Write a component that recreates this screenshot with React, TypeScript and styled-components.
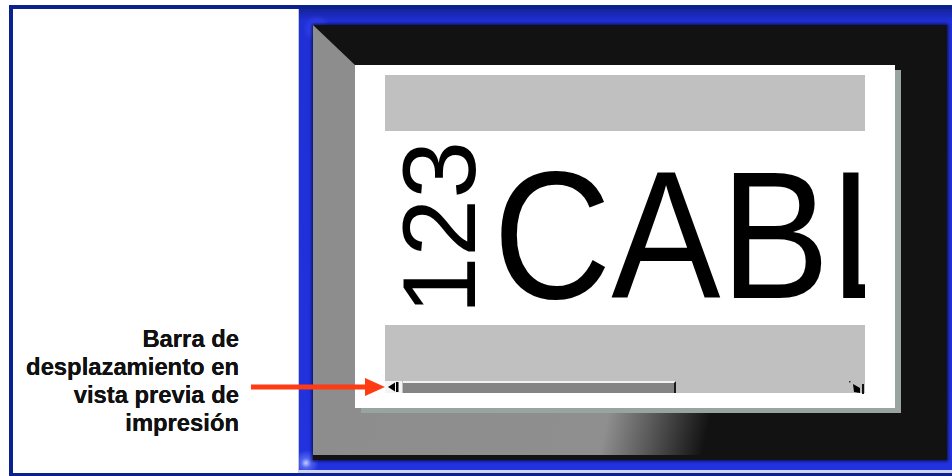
import styled, { createGlobalStyle } from 'styled-components';

const GlobalStyle = createGlobalStyle`
  html, body {
    margin: 0;
    padding: 0;
    background: #ffffff;
    overflow: hidden;
  }
  body {
    font-family: "Liberation Sans", Arial, sans-serif;
  }
`;

const Frame = styled.div`
  position: relative;
  margin: 5px 0 0 9px;
  height: 464px;
  border: 4px solid #0a2290;
  border-right: none;
  display: flex;
  background: #ffffff;
`;

const Callout = styled.div`
  width: 285px;
  flex: none;
  box-sizing: border-box;
  padding: 316px 59px 0 0;
  text-align: right;
  font-size: 23.8px;
  font-weight: 700;
  line-height: 28px;
  color: #111111;
  text-shadow: 0 0 0.5px #000000;
`;

const Arrow = styled.svg`
  position: absolute;
  left: 238px;
  top: 369px;
  z-index: 3;
`;

const Screen = styled.div`
  flex: 1;
  display: flex;
  border-left: 1px solid #c3c7dd;
  border-bottom: 3px solid #d2d5ea;
  padding: 16px 5px 10px 14px;
  background:
    radial-gradient(circle at 7px calc(100% - 7px), #c4ccff 0, rgba(110, 130, 255, 0.6) 5px, rgba(40, 60, 230, 0) 13px),
    radial-gradient(circle at 18px 20px, #3b4dff 0, rgba(50, 70, 255, 0) 14px),
    linear-gradient(to bottom, #16239a 0, #2030d6 12px, #2232de 100%);
`;

const Display = styled.div`
  flex: 1;
  position: relative;
  box-sizing: border-box;
  padding: 40px 0 0 42px;
  background: #121212;
  box-shadow: 0 0 3px 1px #0a0f50;

  &::before {
    content: '';
    position: absolute;
    left: 0;
    top: 0;
    bottom: 5px;
    width: 42px;
    background: #8d8d8d;
    clip-path: polygon(0 0, 100% 40px, 100% 100%, 0 100%);
  }

  &::after {
    content: '';
    position: absolute;
    left: 0;
    right: 0;
    bottom: 5px;
    height: 47px;
    background: linear-gradient(102deg, #8d8d8d 0, #8f8f8f 46%, #5a5a5a 53%, #121212 62%);
  }
`;

const Label = styled.div`
  position: relative;
  z-index: 1;
  width: 540px;
  height: 343px;
  box-sizing: border-box;
  padding: 10px 30px 15px;
  display: flex;
  flex-direction: column;
  background: #ffffff;
  box-shadow: 6px 5px 0 #98a49f;
`;

const Band = styled.div<{ $h: number }>`
  height: ${({ $h }) => $h}px;
  flex: none;
  background: #c0c0c0;
  display: flex;
  align-items: flex-end;
`;

const Middle = styled.div`
  flex: 1;
  display: flex;
  align-items: flex-start;
  overflow: hidden;
  white-space: nowrap;
  color: #000000;
`;

const Digits = styled.div`
  align-self: center;
  margin-left: 4px;
  writing-mode: vertical-rl;
  transform: rotate(180deg);
  font-size: 104px;
  line-height: 100px;
`;

const BigText = styled.div`
  margin: 13px 0 0 4px;
  font-size: 182px;
  line-height: 182px;
  transform: scaleX(0.9);
  transform-origin: left top;
`;

const ScrollRow = styled.div`
  width: 100%;
  height: 12px;
  display: flex;
  align-items: stretch;
`;

const Track = styled.div`
  width: 273px;
  margin-left: 1px;
  box-sizing: border-box;
  background: #848484;
  border-top: 2px solid #f2f2f2;
  border-right: 2px solid #1a1a1a;
`;

const Spacer = styled.div`
  flex: 1;
`;

export default function App() {
  return (
    <>
      <GlobalStyle />
      <Frame>
        <Callout>
          Barra de
          <br />
          desplazamiento en
          <br />
          vista previa de
          <br />
          impresión
        </Callout>
        <Arrow width="134" height="18" viewBox="0 0 134 18">
          <line x1="0" y1="9" x2="118" y2="9" stroke="#ff3b14" strokeWidth="5" />
          <polygon points="114,0 134,9 114,18" fill="#ff3b14" />
        </Arrow>
        <Screen>
          <Display>
            <Label>
              <Band $h={56} />
              <Middle>
                <Digits>123</Digits>
                <BigText>CABL</BigText>
              </Middle>
              <Band $h={68}>
                <ScrollRow>
                  <svg width="17" height="12" viewBox="0 0 17 12">
                    <rect x="0" y="0" width="17" height="12" fill="#f4f4f4" />
                    <polygon points="3,6 10,1.5 10,10.5" fill="#000" />
                    <rect x="11" y="1" width="2.5" height="10" fill="#000" />
                  </svg>
                  <Track />
                  <Spacer />
                  <svg width="16" height="13" viewBox="0 0 16 13">
                    <rect x="0" y="0" width="1.5" height="1.5" fill="#333" />
                    <polygon points="4,3 11,7 11,12 5,11" fill="#000" />
                    <rect x="13" y="3" width="2" height="10" fill="#111" />
                  </svg>
                </ScrollRow>
              </Band>
            </Label>
          </Display>
        </Screen>
      </Frame>
    </>
  );
}
